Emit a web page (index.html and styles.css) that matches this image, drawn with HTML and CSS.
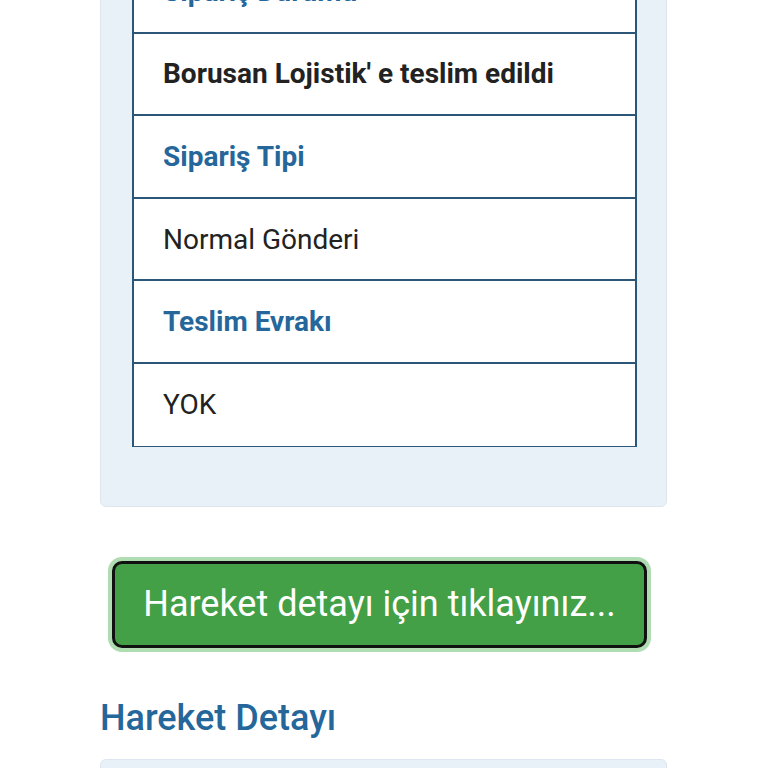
FILE: index.html
```html
<!DOCTYPE html>
<html lang="tr">
<head>
    <meta charset="UTF-8">
    <meta name="viewport" content="width=device-width, initial-scale=1.0">
    <title>Gönderi Takip</title>
    <link rel="stylesheet" href="styles.css">
</head>
<body>
    <div class="page">
        <div class="info-panel">
            <div class="detail-table">
                <div class="detail-row label">Sipariş Durumu</div>
                <div class="detail-row value strong">Borusan Lojistik' e teslim edildi</div>
                <div class="detail-row label">Sipariş Tipi</div>
                <div class="detail-row value">Normal Gönderi</div>
                <div class="detail-row label">Teslim Evrakı</div>
                <div class="detail-row value">YOK</div>
            </div>
        </div>

        <button class="move-btn">Hareket detayı için tıklayınız...</button>

        <h2 class="section-title">Hareket Detayı</h2>
        <div class="info-panel next-panel"></div>
    </div>
</body>
</html>
```

FILE: styles.css
```css
body {
    margin: 0;
    padding: 0;
    background: #fff;
    font-family: Roboto, "Liberation Sans", sans-serif;
    color: #222;
    overflow: hidden;
}

.page {
    padding: 0 101px 0 100px;
}

.info-panel {
    background: #e9f1f8;
    border: 1px solid #dde6ee;
    border-radius: 6px;
    padding: 32px 29px 59px 31px;
    margin-top: -82px;
}

.detail-table {
    border: 2px solid #2c5677;
    border-top: none;
    border-bottom-width: 1.5px;
    background: #fff;
}

.detail-row {
    box-sizing: border-box;
    height: 82.6px;
    display: flex;
    align-items: center;
    padding: 0 29px;
    font-size: 28px;
    border-bottom: 2px solid #2c5677;
}

.detail-row:last-child {
    border-bottom: none;
    height: 81.6px;
}

.label {
    color: #25679a;
    font-weight: 700;
}

.value.strong {
    font-weight: 700;
}

.move-btn {
    display: block;
    box-sizing: border-box;
    width: 535px;
    height: 87px;
    margin: 54px 0 0 12px;
    background: #43a046;
    color: #fff;
    border: 3px solid #111;
    border-radius: 10px;
    box-shadow: 0 0 0 4px #b0dcb2;
    font-family: Roboto, "Liberation Sans", sans-serif;
    font-size: 36px;
    cursor: pointer;
}

.section-title {
    margin: 49px 0 20px;
    font-size: 36px;
    font-weight: 500;
    color: #25679a;
}

.next-panel {
    margin-top: 0;
    height: 100px;
}
```
